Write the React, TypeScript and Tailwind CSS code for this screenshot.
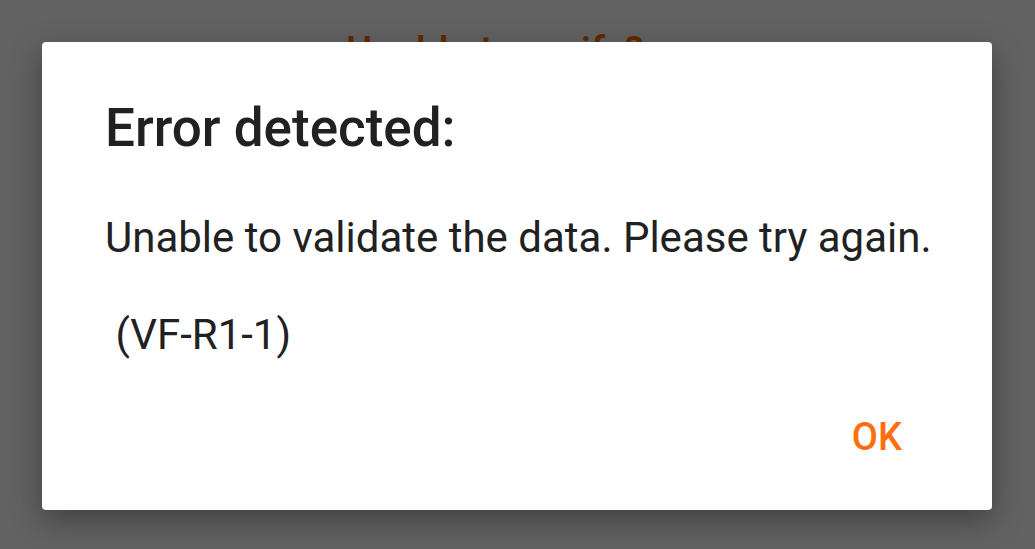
export default function App() {
  return (
    <div className="relative h-[549px] w-[1035px] overflow-hidden bg-white font-['Roboto',sans-serif]">
      {/* page behind the dialog */}
      <div className="pl-[346px] pt-[28px] text-[40px] font-medium leading-[48px] text-[#ff6d00]">
        Unable to verify?
      </div>

      {/* scrim + dialog */}
      <div className="absolute inset-0 flex items-start bg-black/[0.615] pl-[42px] pt-[42px]">
        <div className="flex h-[468px] w-[950px] flex-col rounded-[4px] bg-white pl-[63px] pr-[40px] shadow-[0_10px_30px_rgba(0,0,0,0.35)]">
          <h1 className="mt-[55px] text-[53px] font-medium leading-[62px] text-[#212121]">
            Error detected:
          </h1>
          <p className="mt-[54px] text-[42px] leading-[50px] text-[#212121]">
            Unable to validate the data. Please try again.
          </p>
          <p className="mt-[47px] whitespace-pre text-[42px] leading-[50px] text-[#212121]">
            {' (VF-R1-1)'}
          </p>
          <div className="mt-auto mb-[51px] flex justify-end">
            <button className="mr-[50px] text-[38px] font-medium leading-[44px] text-[#ff6d0e]">OK</button>
          </div>
        </div>
      </div>
    </div>
  )
}
